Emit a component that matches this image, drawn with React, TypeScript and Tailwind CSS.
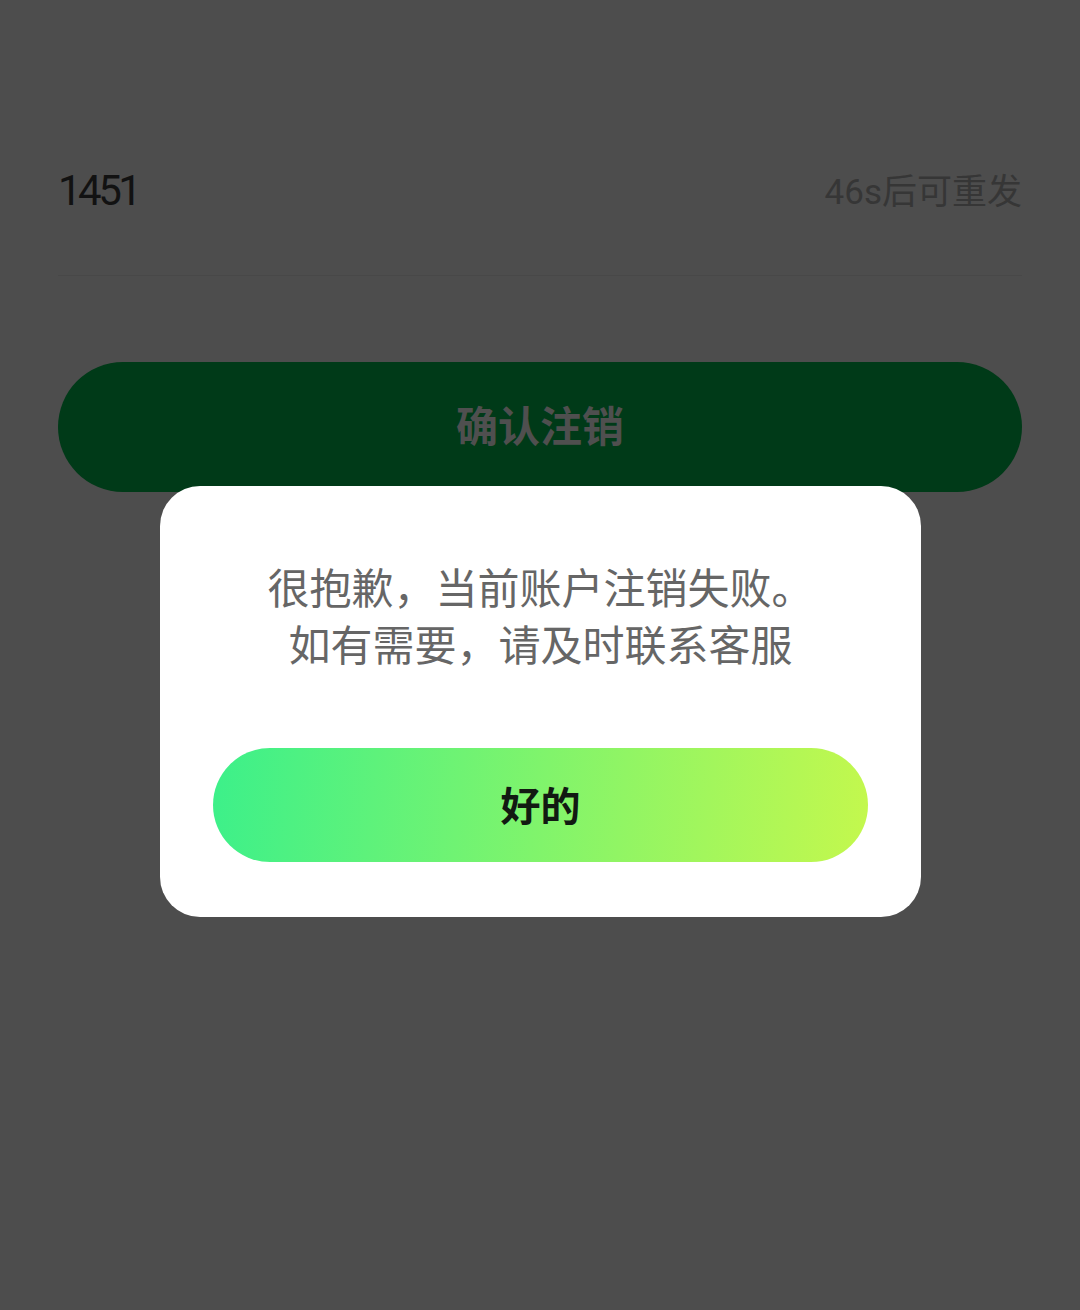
import React from "react";

export default function App() {
  return (
    <div
      className="relative w-full h-[1310px] bg-[#4d4d4d] overflow-hidden"
      style={{ fontFamily: 'Roboto, "Noto Sans CJK SC", sans-serif' }}
    >
      <div className="px-[58px] pt-[161px]">
        <div className="flex items-center justify-between h-[60px]">
          <span className="text-[42px] tracking-[-3.5px] text-[#121212] leading-none">1451</span>
          <span className="text-[35px] text-[#363636] leading-none pt-[2px]">46s后可重发</span>
        </div>
        <div className="mt-[54px] h-px bg-[#484848]" />
        <div className="mt-[86px] h-[130px] rounded-full bg-[#003a18] flex items-center justify-center">
          <span className="text-[42px] font-bold text-[#4f4f4f]">确认注销</span>
        </div>
      </div>

      <div className="absolute left-[160px] top-[486px] w-[761px] h-[431px] rounded-[40px] bg-white flex flex-col items-center pt-[75px]">
        <div className="text-[42px] leading-[57px] text-[#666666] text-center">
          <div>很抱歉，当前账户注销失败。</div>
          <div>如有需要，请及时联系客服</div>
        </div>
        <div className="mt-[73px] w-[655px] h-[114px] rounded-full bg-[linear-gradient(96deg,#3cf08a,#c4f84d)] flex items-center justify-center pt-[5px]">
          <span className="text-[40px] font-bold text-[#121a12]">好的</span>
        </div>
      </div>
    </div>
  );
}
